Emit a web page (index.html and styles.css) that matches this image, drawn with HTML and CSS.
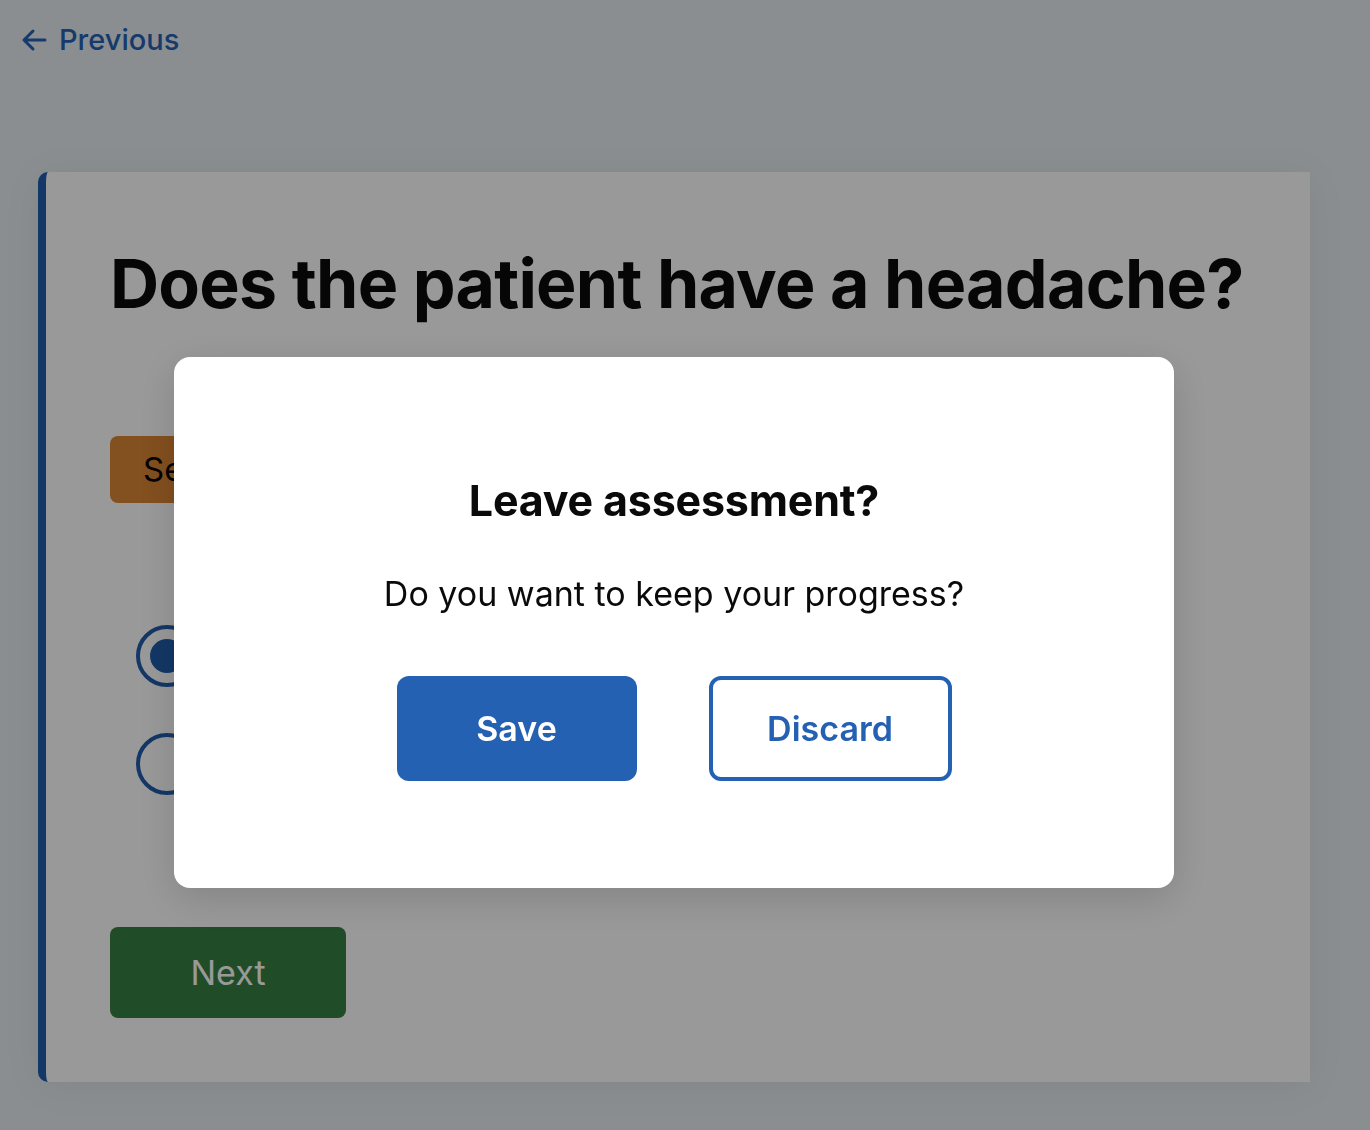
FILE: index.html
```html
<!DOCTYPE html>
<html lang="en">
<head>
<meta charset="utf-8">
<title>Assessment</title>
<link rel="stylesheet" href="styles.css">
</head>
<body>
<header class="topbar">
  <a class="prev-link" href="#">
    <svg class="prev-icon" viewBox="0 0 28 28" width="28" height="28" aria-hidden="true">
      <path d="M25 14H4M13 5L4 14L13 23" fill="none" stroke="currentColor" stroke-width="3" stroke-linecap="round" stroke-linejoin="round"/>
    </svg>
    <span>Previous</span>
  </a>
</header>
<main class="card">
  <h1 class="question">Does the patient have a headache?</h1>
  <div class="badge">Select one</div>
  <div class="options">
    <label class="option"><span class="radio checked"></span><span class="option-label">Yes</span></label>
    <label class="option"><span class="radio"></span><span class="option-label">No</span></label>
  </div>
  <button class="next-btn">Next</button>
</main>
<div class="overlay">
  <div class="modal" role="dialog">
    <h2 class="modal-title">Leave assessment?</h2>
    <p class="modal-text">Do you want to keep your progress?</p>
    <div class="modal-actions">
      <button class="btn btn-primary">Save</button>
      <button class="btn btn-outline">Discard</button>
    </div>
  </div>
</div>
</body>
</html>
```

FILE: styles.css
```css
* { box-sizing: border-box; }
html, body { margin: 0; padding: 0; }
body {
  background: #e6edf0;
  font-family: Inter, "Noto Sans", sans-serif;
  color: #0a0a0a;
  min-height: 1130px;
}
.topbar {
  padding: 20px 20px 0 20px;
  height: 172px;
}
.prev-link {
  display: inline-flex;
  align-items: center;
  gap: 11px;
  color: #2461b3;
  text-decoration: none;
  font-size: 29px;
  font-weight: 500;
  line-height: 40px;
}
.prev-icon { display: block; }
.card {
  margin-left: 38px;
  width: 1272px;
  background: #fff;
  border-left: 8px solid #205caa;
  border-radius: 10px 0 0 10px;
  padding: 70px 40px 64px 64px;
  box-shadow: 0 4px 40px rgba(0,0,0,0.06);
}
.question {
  margin: 0;
  font-size: 68px;
  font-weight: 700;
  line-height: 82px;
  letter-spacing: -0.75px;
  white-space: nowrap;
}
.badge {
  display: inline-block;
  margin-top: 112px;
  background: #da8534;
  color: #000;
  font-size: 33px;
  line-height: 67px;
  height: 67px;
  padding: 0 33px;
  border-radius: 8px;
}
.options {
  margin-top: 122px;
  display: flex;
  flex-direction: column;
  gap: 46px;
  padding-left: 26px;
}
.option {
  display: flex;
  align-items: center;
  gap: 24px;
  font-size: 32px;
}
.radio {
  width: 62px;
  height: 62px;
  border: 4px solid #205caa;
  border-radius: 50%;
  display: flex;
  align-items: center;
  justify-content: center;
}
.radio.checked::after {
  content: "";
  width: 34px;
  height: 34px;
  border-radius: 50%;
  background: #205caa;
}
.next-btn {
  display: block;
  margin-top: 132px;
  width: 236px;
  height: 91px;
  background: #377f44;
  color: #fff;
  border: none;
  border-radius: 8px;
  font-family: Inter, "Noto Sans", sans-serif;
  font-size: 34px;
  font-weight: 400;
}
.overlay {
  position: fixed;
  inset: 0;
  background: rgba(0,0,0,0.4);
}
.modal {
  position: absolute;
  left: 174px;
  top: 357px;
  width: 1000px;
  height: 531px;
  background: #fff;
  border-radius: 16px;
  box-shadow: 0 10px 40px rgba(0,0,0,0.15);
  padding: 117px 0 0 0;
  text-align: center;
}
.modal-title {
  margin: 0;
  font-size: 43px;
  font-weight: 700;
  line-height: 52px;
  letter-spacing: -0.2px;
}
.modal-text {
  margin: 44px 0 0 0;
  font-size: 34px;
  line-height: 48px;
}
.modal-actions {
  margin-top: 58px;
  display: flex;
  justify-content: center;
  gap: 72px;
}
.btn {
  width: 240px;
  height: 105px;
  border-radius: 12px;
  font-family: Inter, "Noto Sans", sans-serif;
  font-size: 34px;
  font-weight: 600;
}
.btn-primary {
  background: #2461b3;
  color: #fff;
  border: none;
}
.btn-outline {
  width: 243px;
  background: #fff;
  color: #2461b3;
  border: 4px solid #2461b3;
}
```
